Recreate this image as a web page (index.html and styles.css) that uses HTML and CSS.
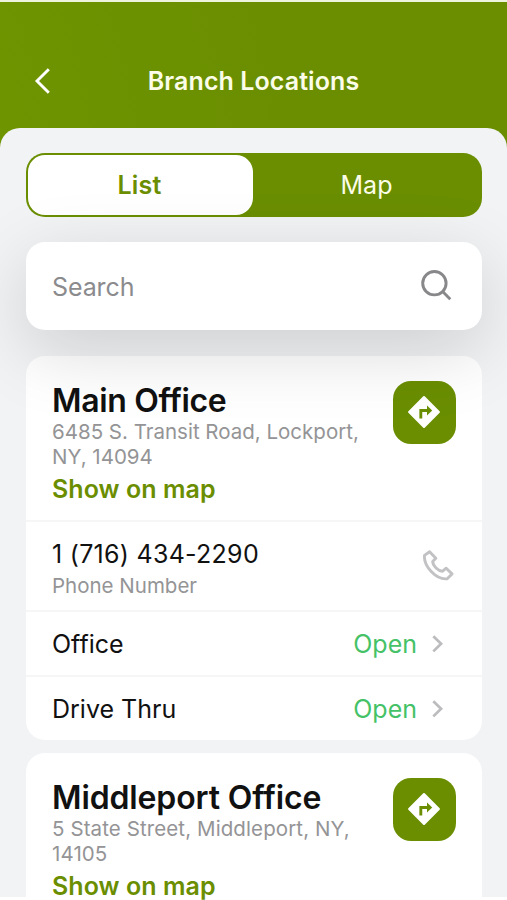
FILE: index.html
```html
<!DOCTYPE html>
<html lang="en">
<head>
<meta charset="utf-8">
<title>Branch Locations</title>
<link rel="stylesheet" href="styles.css">
</head>
<body>
<div class="screen">
  <header class="header">
    <svg class="back" viewBox="0 0 20 30"><path d="M15.800 3.200 4 15l11.800 11.800"/></svg>
    <h1 class="title">Branch Locations</h1>
  </header>
  <main class="sheet">
    <div class="tabs">
      <div class="tab tab-active">List</div>
      <div class="tab">Map</div>
    </div>
    <div class="search">
      <span class="placeholder">Search</span>
      <svg class="search-icon" viewBox="0 0 32 32"><circle cx="14.400" cy="13.200" r="11.700"/><path d="m22.600 21.400 7.700 7.800"/></svg>
    </div>
    <section class="card">
      <div class="branch">
        <div class="branch-text">
          <h2 class="name">Main Office</h2>
          <p class="address">6485 S. Transit Road, Lockport,<br>NY, 14094</p>
          <a class="map-link">Show on map</a>
        </div>
        <div class="directions">
          <svg viewBox="0 0 32 32"><path class="sign" d="M16 2 30 16 16 30 2 16z"/><path class="turn" d="M13 22v-7.400h6.500"/><path class="tip" d="m18.800 9.800 4.900 4.800-4.900 4.800z"/></svg>
        </div>
      </div>
      <div class="row phone">
        <div>
          <div class="number">1 (716) 434-2290</div>
          <div class="caption">Phone Number</div>
        </div>
        <svg class="phone-icon" viewBox="0 0 32 32"><path d="M7.600 1.800 2.500 5.400C1.400 16 14 30 25.200 28.800L30 23.900 24.200 18.200 20.600 21.200C16.500 21.400 10.600 15.700 10.700 11.400L13.800 8.200Z"/></svg>
      </div>
      <div class="row">
        <span>Office</span>
        <span class="status">Open</span>
        <svg class="chevron" viewBox="0 0 12 20"><path d="m1.300 2.200 7.800 7.600-7.800 7.600"/></svg>
      </div>
      <div class="row">
        <span>Drive Thru</span>
        <span class="status">Open</span>
        <svg class="chevron" viewBox="0 0 12 20"><path d="m1.300 2.200 7.800 7.600-7.800 7.600"/></svg>
      </div>
    </section>
    <section class="card">
      <div class="branch">
        <div class="branch-text">
          <h2 class="name name-long">Middleport Office</h2>
          <p class="address address-wide">5 State Street, Middleport, NY,<br>14105</p>
          <a class="map-link">Show on map</a>
        </div>
        <div class="directions">
          <svg viewBox="0 0 32 32"><path class="sign" d="M16 2 30 16 16 30 2 16z"/><path class="turn" d="M13 22v-7.400h6.500"/><path class="tip" d="m18.800 9.800 4.900 4.800-4.900 4.800z"/></svg>
        </div>
      </div>
    </section>
  </main>
</div>
</body>
</html>
```
FILE: styles.css
```css
* { box-sizing: border-box; margin: 0; }
html, body { height: 900px; overflow: hidden; }
body {
  background: #fff;
  font-family: Inter, "Liberation Sans", sans-serif;
  color: #111;
}
svg { display: block; flex: none; fill: none; }
.screen {
  height: 900px;
  border-top: 2px solid #edf3dc;
  background: linear-gradient(75deg, #6f9600, #6a8e00 60%) 0 0 / 100% 400px no-repeat;
  overflow: hidden;
}
.header {
  height: 126px;
  padding: 32px 33px 0 33px;
  display: grid;
  grid-template-columns: 20px 1fr 20px;
  align-items: center;
}
.back { width: 20px; height: 30px; stroke: #fff; stroke-width: 2.9; }
.title {
  text-align: center;
  font-size: 25px;
  font-weight: 600;
  letter-spacing: .08px;
  color: #fbfde9;
}
.sheet {
  height: 772px;
  padding: 25px 25px 0 26px;
  border-radius: 20px 20px 0 0;
  background: linear-gradient(#f1f3f5 769px, #fff 769px);
  overflow: hidden;
}
.tabs {
  height: 64px;
  padding: 2px;
  display: grid;
  grid-template-columns: 225px 1fr;
  border-radius: 19px;
  background: #6a8e00;
}
.tab {
  display: flex;
  align-items: center;
  justify-content: center;
  font-size: 25px;
  color: #fbfde9;
}
.tab-active {
  padding-right: 2px;
  border-radius: 17px;
  background: #fff;
  color: #6a8e00;
  font-weight: 600;
  letter-spacing: .2px;
}
.search {
  position: relative;
  z-index: 1;
  height: 88px;
  margin: 25px 0 26px;
  padding: 0 30px 0 26px;
  display: flex;
  align-items: center;
  justify-content: space-between;
  border-radius: 19px;
  background: #fff;
  box-shadow: 0 20px 72px rgba(0, 0, 0, .155);
  font-size: 25px;
  letter-spacing: -.1px;
  color: #8b8b8e;
}
.placeholder { padding-top: 2px; }
.search-icon { width: 32px; height: 32px; stroke: #88888b; stroke-width: 2.9; }
.card {
  margin-bottom: 13px;
  border-radius: 19px;
  background: #fff;
}
.branch {
  height: 164px;
  padding: 25px 26px 0 26px;
  display: flex;
  justify-content: space-between;
}
.name {
  font-size: 32px;
  line-height: 39px;
  font-weight: 600;
  letter-spacing: -.35px;
  white-space: nowrap;
}
.name-long { letter-spacing: -.13px; }
.address {
  margin: -1px 0 2px;
  font-size: 20.5px;
  line-height: 25px;
  color: #949496;
  white-space: nowrap;
}
.address-wide { letter-spacing: .1px; }
.map-link {
  display: block;
  font-size: 25px;
  line-height: 36px;
  font-weight: 600;
  letter-spacing: .05px;
  color: #6a8e00;
}
.directions {
  width: 63px;
  height: 63px;
  display: grid;
  place-items: center;
  border-radius: 18px;
  background: #6a8e00;
}
.directions svg { width: 34px; height: 34px; margin: -1px 2px 0 0; }
.sign { fill: #fff; stroke: #fff; stroke-width: 2; stroke-linejoin: round; }
.turn { stroke: #6a8e00; stroke-width: 2.7; }
.tip { fill: #6a8e00; }
.row {
  height: 65px;
  padding: 0 38px 0 26px;
  display: flex;
  align-items: center;
  border-top: 2px solid #f6f6f7;
  font-size: 25px;
}
.phone { height: 90px; padding-right: 28px; justify-content: space-between; }
.number { padding-top: 5px; line-height: 34px; letter-spacing: .28px; }
.caption { font-size: 20.5px; line-height: 29px; color: #949496; }
.phone-icon { width: 32px; height: 32px; stroke: #c2c2c4; stroke-width: 2.9; stroke-linejoin: round; }
.status { margin-left: auto; margin-right: 15px; color: #45c267; }
.chevron { width: 12px; height: 20px; stroke: #bcbcbf; stroke-width: 2.7; }
```
